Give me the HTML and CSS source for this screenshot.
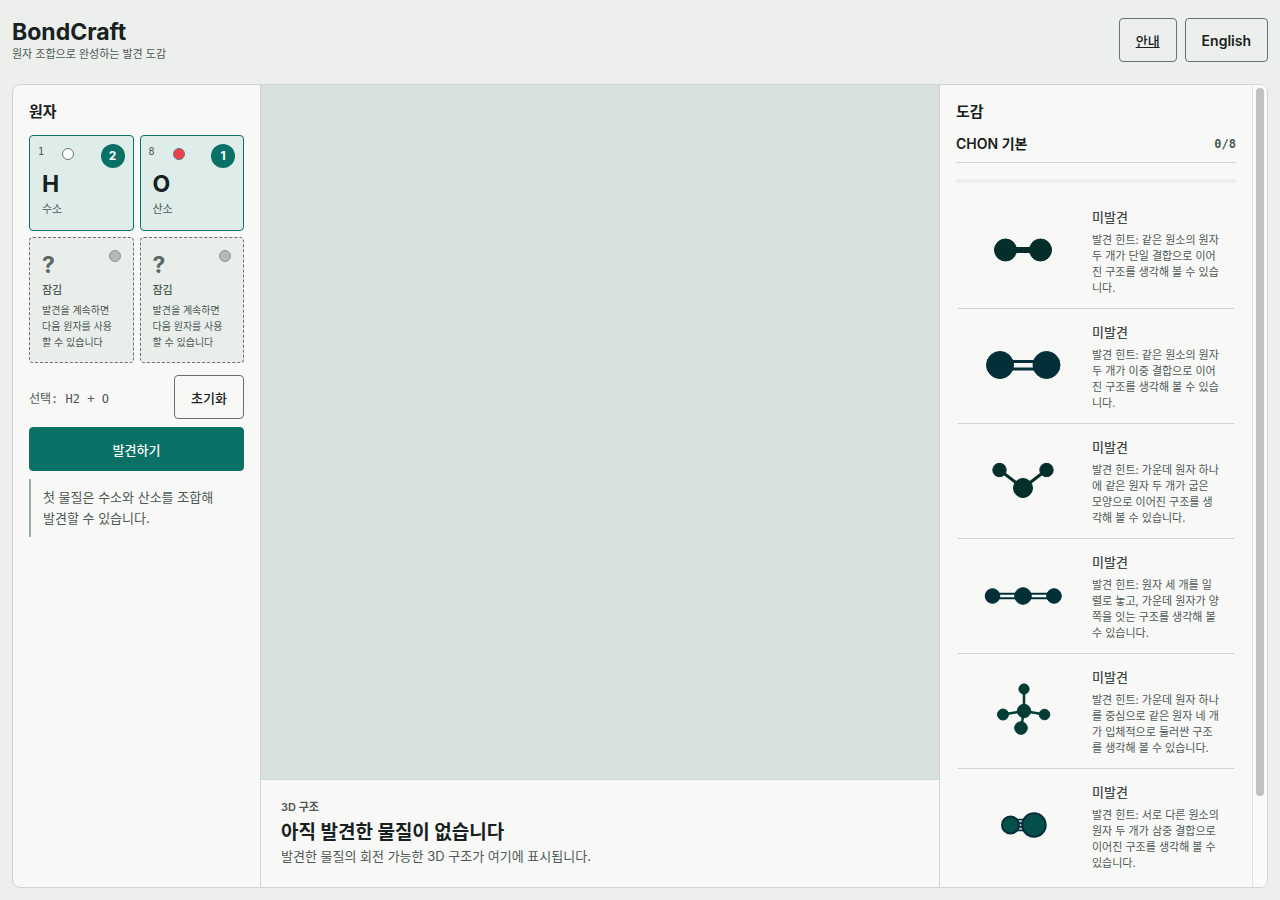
FILE: index.html
```html
<!DOCTYPE html>
<html lang="ko">
<head>
    <meta charset="UTF-8">
    <meta name="viewport" content="width=device-width, initial-scale=1.0">
    <title>BondCraft</title>
    <link rel="stylesheet" href="styles.css">
</head>
<body>

    <header class="topbar">
        <div class="brand">
            <h1>BondCraft</h1>
            <p>원자 조합으로 완성하는 발견 도감</p>
        </div>
        <nav class="topbar-actions">
            <a href="#" class="btn btn-link">안내</a>
            <button type="button" class="btn btn-lang">English</button>
        </nav>
    </header>

    <main class="workspace">

        <!-- Atoms -->
        <section class="panel atoms">
            <h2>원자</h2>
            <div class="atom-grid">
                <button type="button" class="atom selected">
                    <span class="atom-top">
                        <span class="atom-number">1</span>
                        <span class="dot dot-h"></span>
                        <span class="count">2</span>
                    </span>
                    <span class="symbol">H</span>
                    <span class="atom-name">수소</span>
                </button>
                <button type="button" class="atom selected">
                    <span class="atom-top">
                        <span class="atom-number">8</span>
                        <span class="dot dot-o"></span>
                        <span class="count">1</span>
                    </span>
                    <span class="symbol">O</span>
                    <span class="atom-name">산소</span>
                </button>
                <button type="button" class="atom locked" disabled>
                    <span class="dot"></span>
                    <span class="symbol">?</span>
                    <span class="atom-name">잠김</span>
                    <span class="atom-note">발견을 계속하면 다음 원자를 사용할 수 있습니다</span>
                </button>
                <button type="button" class="atom locked" disabled>
                    <span class="dot"></span>
                    <span class="symbol">?</span>
                    <span class="atom-name">잠김</span>
                    <span class="atom-note">발견을 계속하면 다음 원자를 사용할 수 있습니다</span>
                </button>
            </div>
            <div class="selection">
                <span class="formula">선택: H2 + O</span>
                <button type="button" class="btn">초기화</button>
            </div>
            <button type="button" class="btn btn-primary">발견하기</button>
            <p class="message">첫 물질은 수소와 산소를 조합해 발견할 수 있습니다.</p>
        </section>

        <!-- 3D viewer -->
        <section class="viewer">
            <div class="stage"></div>
            <div class="caption">
                <p class="eyebrow">3D 구조</p>
                <h2>아직 발견한 물질이 없습니다</h2>
                <p>발견한 물질의 회전 가능한 3D 구조가 여기에 표시됩니다.</p>
            </div>
        </section>

        <!-- Collection -->
        <section class="panel collection">
            <h2>도감</h2>
            <div class="set-head">
                <h3>CHON 기본</h3>
                <span class="set-count">0/8</span>
            </div>
            <div class="progress"></div>
            <ul class="entries">
                <li class="entry">
                    <svg class="molecule green" viewBox="0 0 130 90">
                        <path d="M48 44H82" stroke-width="6"/>
                        <circle cx="47.500" cy="44" r="11"/><circle cx="82.500" cy="44" r="11"/>
                    </svg>
                    <div class="entry-text">
                        <h4>미발견</h4>
                        <p>발견 힌트: 같은 원소의 원자 두 개가 단일 결합으로 이어진 구조를 생각해 볼 수 있습니다.</p>
                    </div>
                </li>
                <li class="entry">
                    <svg class="molecule blue" viewBox="0 0 130 90">
                        <path d="M42 40.500H88M42 48H88" stroke-width="2.800"/>
                        <circle cx="42" cy="44" r="13.500"/><circle cx="88.500" cy="44" r="13.500"/>
                    </svg>
                    <div class="entry-text">
                        <h4>미발견</h4>
                        <p>발견 힌트: 같은 원소의 원자 두 개가 이중 결합으로 이어진 구조를 생각해 볼 수 있습니다.</p>
                    </div>
                </li>
                <li class="entry">
                    <svg class="molecule green" viewBox="0 0 130 90">
                        <path d="M41.500 34L65 52L88.500 34" stroke-width="3"/>
                        <circle cx="41.500" cy="34" r="6.700"/><circle cx="65" cy="52" r="9.500"/><circle cx="88.500" cy="34" r="6.700"/>
                    </svg>
                    <div class="entry-text">
                        <h4>미발견</h4>
                        <p>발견 힌트: 가운데 원자 하나에 같은 원자 두 개가 굽은 모양으로 이어진 구조를 생각해 볼 수 있습니다.</p>
                    </div>
                </li>
                <li class="entry">
                    <svg class="molecule blue" viewBox="0 0 130 90">
                        <path d="M34 42.700H96M34 47.300H96" stroke-width="2"/>
                        <circle cx="34.500" cy="45" r="7.300"/><circle cx="65" cy="45" r="8.300"/><circle cx="96" cy="45" r="7.300"/>
                    </svg>
                    <div class="entry-text">
                        <h4>미발견</h4>
                        <p>발견 힌트: 원자 세 개를 일렬로 놓고, 가운데 원자가 양쪽을 잇는 구조를 생각해 볼 수 있습니다.</p>
                    </div>
                </li>
                <li class="entry">
                    <svg class="molecule teal" viewBox="0 0 130 90">
                        <path d="M66 23V45M66 45L45 48.500M66 45L86.500 48.500M66 45L63 62" stroke-width="2.500"/>
                        <circle cx="66" cy="23" r="5.100"/><circle cx="66" cy="45" r="6.700"/><circle cx="45" cy="48.500" r="5.500"/>
                        <circle cx="86.500" cy="48.500" r="5.300"/><circle cx="63" cy="62" r="6.300"/>
                    </svg>
                    <div class="entry-text">
                        <h4>미발견</h4>
                        <p>발견 힌트: 가운데 원자 하나를 중심으로 같은 원자 네 개가 입체적으로 둘러싼 구조를 생각해 볼 수 있습니다.</p>
                    </div>
                </li>
                <li class="entry">
                    <svg class="molecule outlined" viewBox="0 0 130 90">
                        <path class="bond-fill" d="M58 44H72" stroke-width="10"/>
                        <path d="M56 38.500H74M56 42.200H74M56 45.800H74M56 49.500H74" stroke-width="1.700"/>
                        <circle cx="52.500" cy="44" r="8.500"/><circle cx="76" cy="44" r="11.700"/>
                    </svg>
                    <div class="entry-text">
                        <h4>미발견</h4>
                        <p>발견 힌트: 서로 다른 원소의 원자 두 개가 삼중 결합으로 이어진 구조를 생각해 볼 수 있습니다.</p>
                    </div>
                </li>
            </ul>
        </section>
        <div class="scrollbar" aria-hidden="true"><div class="thumb"></div></div>
    </main>

</body>
</html>
```
FILE: styles.css
```css
* {
    box-sizing: border-box;
}

body {
    margin: 0;
    height: 100vh;
    padding: 18px 12px 12px;
    display: flex;
    flex-direction: column;
    gap: 22px;
    background-color: #ecefec;
    color: #17211e;
    font-family: Inter, "Noto Sans CJK KR", sans-serif;
    font-size: 13px;
}

h1, h2, h3, h4, p, ul {
    margin: 0;
    padding: 0;
}

button {
    font-family: inherit;
    color: inherit;
}

/* Top bar */
.topbar {
    display: flex;
    justify-content: space-between;
    align-items: flex-start;
}

.brand h1 {
    font-size: 23px;
    line-height: 28px;
}

.brand p {
    color: #4c5854;
    font-size: 11px;
    line-height: 16px;
}

.topbar-actions {
    display: flex;
    gap: 8px;
}

.btn {
    min-height: 44px;
    padding: 0 16px;
    display: inline-flex;
    align-items: center;
    justify-content: center;
    background-color: transparent;
    border: 1px solid #68736f;
    border-radius: 4px;
    color: #17211e;
    font-size: 13px;
    font-weight: 500;
    cursor: pointer;
}

.btn-link {
    text-decoration: underline;
}

.btn-lang {
    font-size: 14px;
    font-weight: 600;
}

.btn-primary {
    background-color: #0b7167;
    border-color: #0b7167;
    color: #f8f9f7;
}

/* Workspace */
.workspace {
    flex: 1;
    min-height: 0;
    display: grid;
    grid-template-columns: 248px minmax(0, 1fr) 312px 15px;
    background-color: #f8f9f7;
    border: 1px solid #cdd5d1;
    border-radius: 8px;
    overflow: hidden;
}

.panel {
    padding: 16px;
    min-height: 0;
}

.panel h2 {
    font-size: 15px;
    line-height: 22px;
}

.atoms {
    display: flex;
    flex-direction: column;
    gap: 8px;
    border-right: 1px solid #cdd5d1;
}

.atom-grid {
    margin: 4px 0;
    display: grid;
    grid-template-columns: 1fr 1fr;
    gap: 6px;
}

.atom {
    position: relative;
    padding: 8px 8px 12px 12px;
    display: flex;
    flex-direction: column;
    border-radius: 4px;
    text-align: left;
}

.atom.selected {
    background-color: #deedea;
    border: 1px solid #0b7167;
    cursor: pointer;
}

.atom-top {
    margin-left: -4px;
    display: flex;
    height: 24px;
}

.atom-number {
    width: 24px;
    color: #4c5854;
    font-family: "DejaVu Sans Mono", monospace;
    font-size: 10px;
    line-height: 16px;
}

.dot {
    width: 12px;
    height: 12px;
    margin-top: 4px;
    border: 1px solid #68736f;
    border-radius: 50%;
    background-color: #b3bab6;
}

.dot-h {
    background-color: #fff;
}

.dot-o {
    background-color: #ee4048;
}

.count {
    width: 24px;
    height: 24px;
    margin-left: auto;
    border-radius: 50%;
    background-color: #0b7167;
    color: #fff;
    font-size: 12px;
    font-weight: 700;
    line-height: 24px;
    text-align: center;
}

.symbol {
    font-size: 23px;
    font-weight: 700;
    line-height: 32px;
}

.atom-name {
    color: #4c5854;
    font-size: 11px;
    line-height: 18px;
}

.atom.locked {
    padding: 11px 12px 12px;
    background-color: #e9eeeb;
    border: 1px dashed #68736f;
    color: #5e6965;
}

.locked .dot {
    position: absolute;
    top: 8px;
    right: 12px;
    border-color: #8d9692;
}

.locked .atom-name {
    font-weight: 500;
}

.atom-note {
    padding-top: 3px;
    color: #4c5854;
    font-size: 10px;
    line-height: 16px;
}

.selection {
    display: flex;
    align-items: center;
    justify-content: space-between;
}

.formula {
    color: #4c5854;
    font-family: "DejaVu Sans Mono", "Noto Sans CJK KR", monospace;
    font-size: 12px;
}

.message {
    padding: 8px 20px 8px 12px;
    border-left: 2px solid #9aaba5;
    color: #4c5854;
    line-height: 21px;
}

/* Viewer */
.viewer {
    display: flex;
    flex-direction: column;
    border-right: 1px solid #cdd5d1;
}

.stage {
    flex: 1;
    background-color: #d7e0db;
}

.caption {
    padding: 18px 20px 20px;
    border-top: 1px solid #cdd5d1;
    color: #4c5854;
    line-height: 21px;
}

.caption .eyebrow {
    font-size: 11px;
    font-weight: 600;
    line-height: 18px;
}

.caption h2 {
    padding: 4px 0 1px;
    color: #17211e;
    font-size: 19px;
    line-height: 25px;
}

/* Collection */
.collection {
    overflow-y: auto;
    scrollbar-width: none;
}

.scrollbar {
    padding: 3px;
    background-color: #fafafa;
    border-left: 1px solid #e0e3e1;
}

.thumb {
    width: 8px;
    height: 89%;
    border-radius: 4px;
    background-color: #c1c1c1;
}

.set-head {
    margin-top: 8px;
    padding-bottom: 5px;
    display: flex;
    align-items: center;
    justify-content: space-between;
    border-bottom: 1px solid #cdd5d1;
    line-height: 26px;
}

.set-head h3 {
    font-size: 14px;
    font-weight: 600;
}

.set-count {
    color: #4c5854;
    font-family: "DejaVu Sans Mono", monospace;
    font-size: 12px;
    font-weight: 700;
}

.progress {
    height: 4px;
    margin-top: 16px;
    background-color: #ecefec;
}

.entries {
    padding: 11px 2px 90px;
    list-style: none;
}

.entry {
    padding: 12px 13px 12px 0;
    display: grid;
    grid-template-columns: 130px minmax(0, 1fr);
    gap: 4px;
    align-items: center;
    border-bottom: 1px solid #cdd5d1;
}

.entry:last-child {
    border-bottom-color: transparent;
}

.entry h4 {
    padding-bottom: 4px;
    color: #3f4b47;
    font-size: 13px;
    font-weight: 500;
    line-height: 22px;
}

.entry p {
    color: #4c5854;
    font-size: 11px;
    line-height: 16px;
}

.molecule {
    width: 130px;
    height: 90px;
    display: block;
}

.molecule path {
    fill: none;
}

.molecule circle {
    stroke-width: 1;
}

.green {
    fill: #032e2a;
    stroke: #032e2a;
}

.blue {
    fill: #032f38;
    stroke: #032f38;
}

.teal {
    fill: #033b36;
    stroke: #033b36;
}

.outlined {
    fill: #05504a;
    stroke: #052c3a;
}

.outlined circle {
    stroke-width: 2;
}

.outlined .bond-fill {
    stroke: #b9c6cf;
}
```
